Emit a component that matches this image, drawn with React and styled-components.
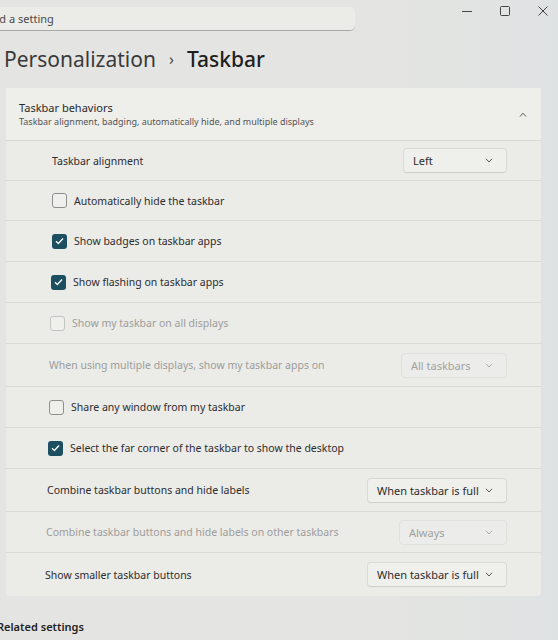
import React from 'react';
import styled, { createGlobalStyle } from 'styled-components';

const GlobalStyle = createGlobalStyle`
  body {
    margin: 0;
    background: #e3e4e2;
    font-family: "Noto Sans", "Open Sans", sans-serif;
    color: #2b2b2b;
  }
`;

const Page = styled.div`
  width: 558px;
  height: 640px;
  overflow: hidden;
  display: flex;
  flex-direction: column;
  background: linear-gradient(90deg, #e4e5e2 0%, #e4e5e2 70%, #dfe2e3 100%);
`;

const TopBar = styled.div`
  display: flex;
  align-items: flex-start;
  height: 40px;
  padding-top: 7px;
  box-sizing: border-box;
`;

const SearchBox = styled.div`
  margin-left: -30px;
  width: 385px;
  height: 24px;
  box-sizing: border-box;
  padding-left: 14px;
  display: flex;
  align-items: center;
  font-size: 11px;
  color: #4a4a4a;
  background: #ebebe8;
  border-radius: 5px;
  border-bottom: 1px solid #a9aaa8;
`;

const WindowControls = styled.div`
  margin: -4px 0 0 auto;
  display: flex;
  gap: 22px;
  padding-right: 7px;
`;

const ControlIcon = styled.svg`
  width: 16px;
  height: 16px;
  stroke: #444;
  fill: none;
`;

const Title = styled.h1`
  margin: 2px 0 0 4px;
  height: 34px;
  display: flex;
  align-items: center;
  gap: 13px;
  font-size: 21px;
  font-weight: 400;
  color: #3a3a3a;
`;

const Crumb = styled.span`
  font-weight: ${p => (p.$current ? 500 : 400)};
  color: ${p => (p.$current ? '#1f1f1f' : '#3a3a3a')};
`;

const Sep = styled.span`
  font-size: 16px;
  color: #444;
`;

const Card = styled.div`
  margin: 12px 0 0 6px;
  width: 535px;
  display: flex;
  flex-direction: column;
  background: #ebebe8;
  border-radius: 4px;
`;

const Header = styled.div`
  height: 52px;
  display: flex;
  align-items: center;
  padding: 0 14px 0 13px;
  border-bottom: 1px solid #d9d9d6;
  background: #eeeeeb;
`;

const HeaderText = styled.div`
  display: flex;
  flex-direction: column;
  flex: 1;
`;

const HeaderTitle = styled.div`
  font-size: 11px;
  color: #2a2a2a;
`;

const HeaderSub = styled.div`
  font-size: 9px;
  color: #555;
`;

const Row = styled.div`
  height: ${p => p.$h || 41}px;
  display: flex;
  align-items: center;
  padding: 0 34px 0 ${p => p.$pad || 45}px;
  border-bottom: ${p => (p.$last ? 'none' : '1px solid #dadad7')};
  box-sizing: border-box;
  font-size: 10.5px;
  color: ${p => (p.$disabled ? '#9d9d9b' : '#2d2d2d')};
`;

const Label = styled.span`
  flex: 1;
`;

const Box = styled.span`
  width: 15px;
  height: 15px;
  box-sizing: border-box;
  border-radius: 3px;
  margin-right: 7px;
  display: flex;
  align-items: center;
  justify-content: center;
  border: ${p => (p.$checked ? 'none' : `1px solid ${p.$disabled ? '#c4c4c2' : '#8e8e8c'}`)};
  background: ${p => (p.$checked ? '#1c4f60' : '#efefec')};
`;

const Select = styled.div`
  width: ${p => p.$w}px;
  height: 25px;
  box-sizing: border-box;
  display: flex;
  align-items: center;
  justify-content: space-between;
  padding: 0 13px 0 9px;
  border: 1px solid ${p => (p.$disabled ? '#e0e0dd' : '#d9d9d6')};
  border-bottom-color: ${p => (p.$disabled ? '#e0e0dd' : '#cdcdca')};
  border-radius: 4px;
  background: ${p => (p.$disabled ? '#ececea' : '#efefec')};
  color: ${p => (p.$disabled ? '#a2a2a0' : '#2d2d2d')};
  font-size: 11px;
`;

const Related = styled.div`
  margin: 23px 0 0 -3px;
  font-size: 11px;
  font-weight: 600;
  color: #222;
`;

const Chevron = ({ up, color = '#555' }) => (
  <svg width="8" height="5" viewBox="0 0 8 5" fill="none" stroke={color} strokeWidth="1">
    {up ? <path d="M1 4.5 L4 1.2 L7 4.5" /> : <path d="M1 0.8 L4 4 L7 0.8" />}
  </svg>
);

const Check = ({ checked, disabled }) => (
  <Box $checked={checked} $disabled={disabled}>
    {checked && (
      <svg width="9" height="8" viewBox="0 0 9 8" fill="none" stroke="#fff" strokeWidth="1.3">
        <path d="M1 4.2 L3.4 6.5 L8 1.5" />
      </svg>
    )}
  </Box>
);

const Dropdown = ({ value, w, disabled }) => (
  <Select $w={w} $disabled={disabled}>
    <span>{value}</span>
    <Chevron color={disabled ? '#aaa' : '#555'} />
  </Select>
);

const rows = [
  { type: 'select', label: 'Taskbar alignment', value: 'Left', w: 104, pad: 46, h: 40 },
  { type: 'check', label: 'Automatically hide the taskbar', pad: 46, h: 40 },
  { type: 'check', label: 'Show badges on taskbar apps', checked: true, pad: 46 },
  { type: 'check', label: 'Show flashing on taskbar apps', checked: true, pad: 45 },
  { type: 'check', label: 'Show my taskbar on all displays', disabled: true, pad: 44 },
  { type: 'select', label: 'When using multiple displays, show my taskbar apps on', value: 'All taskbars', w: 106, disabled: true, pad: 43, h: 43 },
  { type: 'check', label: 'Share any window from my taskbar', pad: 43 },
  { type: 'check', label: 'Select the far corner of the taskbar to show the desktop', checked: true, pad: 42 },
  { type: 'select', label: 'Combine taskbar buttons and hide labels', value: 'When taskbar is full', w: 140, pad: 41, h: 43 },
  { type: 'select', label: 'Combine taskbar buttons and hide labels on other taskbars', value: 'Always', w: 108, disabled: true, pad: 40, h: 41 },
  { type: 'select', label: 'Show smaller taskbar buttons', value: 'When taskbar is full', w: 140, pad: 39, h: 43 },
];

function App() {
  return (
    <Page>
      <GlobalStyle />
      <TopBar>
        <SearchBox>Find a setting</SearchBox>
        <WindowControls>
          <ControlIcon viewBox="0 0 16 16"><path d="M3 8.5 H13" /></ControlIcon>
          <ControlIcon viewBox="0 0 16 16"><rect x="3.5" y="3.5" width="9" height="9" rx="1" /></ControlIcon>
          <ControlIcon viewBox="0 0 16 16"><path d="M3.5 3.5 L12.5 12.5 M12.5 3.5 L3.5 12.5" /></ControlIcon>
        </WindowControls>
      </TopBar>
      <Title>
        <Crumb>Personalization</Crumb>
        <Sep>›</Sep>
        <Crumb $current>Taskbar</Crumb>
      </Title>
      <Card>
        <Header>
          <HeaderText>
            <HeaderTitle>Taskbar behaviors</HeaderTitle>
            <HeaderSub>Taskbar alignment, badging, automatically hide, and multiple displays</HeaderSub>
          </HeaderText>
          <Chevron up />
        </Header>
        {rows.map((r, i) => (
          <Row key={r.label} $disabled={r.disabled} $pad={r.pad} $h={r.h} $last={i === rows.length - 1}>
            {r.type === 'check' && <Check checked={r.checked} disabled={r.disabled} />}
            <Label>{r.label}</Label>
            {r.type === 'select' && <Dropdown value={r.value} w={r.w} disabled={r.disabled} />}
          </Row>
        ))}
      </Card>
      <Related>Related settings</Related>
    </Page>
  );
}

export default App;
